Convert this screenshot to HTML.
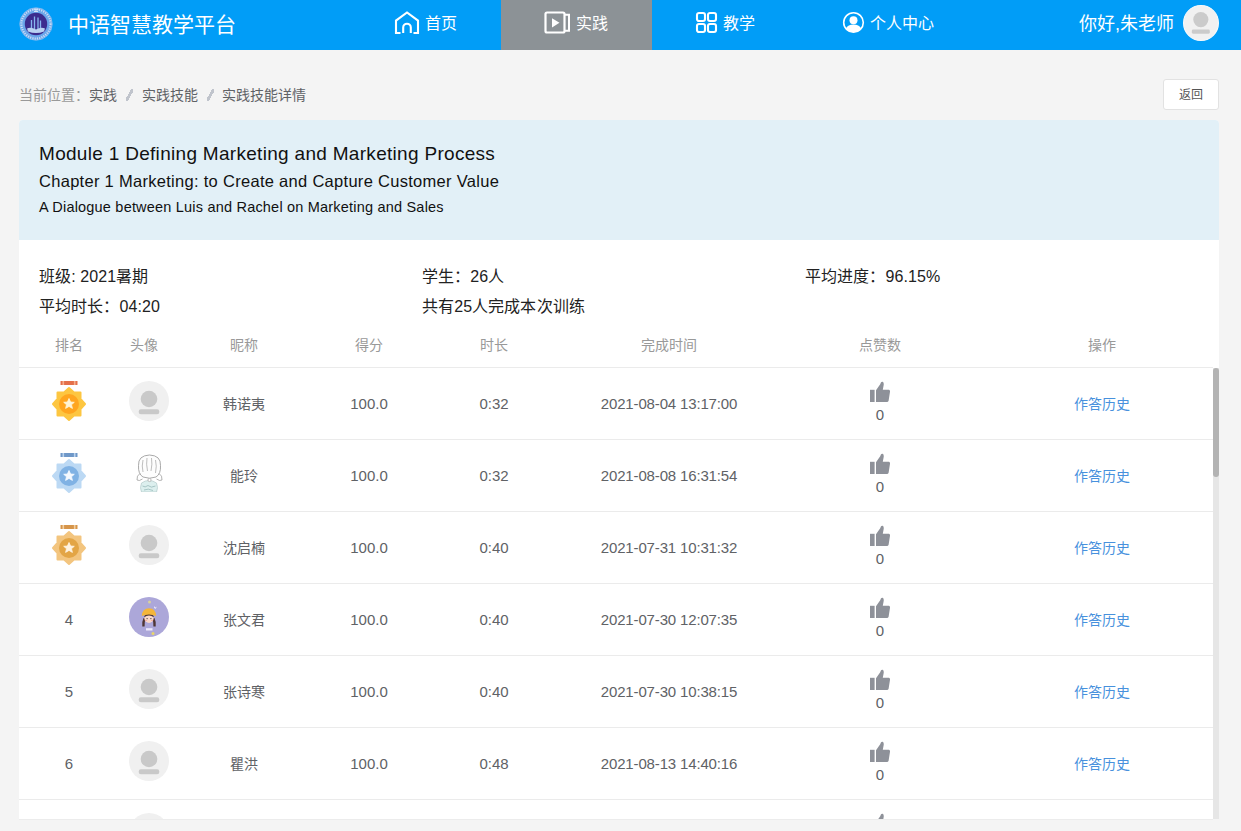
<!DOCTYPE html>
<html lang="zh-CN">
<head>
<meta charset="utf-8">
<style>
*{margin:0;padding:0;box-sizing:border-box;}
html,body{width:1241px;height:831px;overflow:hidden;background:#f4f4f4;font-family:"Liberation Sans",sans-serif;}
svg{display:block;}
.abs{position:absolute;}
.hdr{position:absolute;left:0;top:0;width:1241px;height:50px;background:#019df7;}
.logo{position:absolute;left:19px;top:7px;}
.title{position:absolute;left:68px;top:11px;font-size:21px;line-height:28px;color:#fff;white-space:nowrap;}
.nav{position:absolute;top:0;height:50px;color:#fff;font-size:16px;line-height:48px;white-space:nowrap;}
.ico{position:absolute;}
.active{position:absolute;left:501px;top:0;width:151px;height:50px;background:#8c9296;}
.hello{position:absolute;left:1079px;top:10px;font-size:18px;line-height:28px;color:#fff;white-space:nowrap;}
.hav{position:absolute;left:1183px;top:5px;}
.crumb{position:absolute;left:19px;top:85px;font-size:14px;line-height:20px;color:#999;white-space:nowrap;}
.crumb b{font-weight:normal;color:#5f6266;}
.crumb i{display:inline-block;width:7px;height:12px;margin:0 8.5px 0 9px;vertical-align:-1px;background:linear-gradient(to top left,transparent 38%,#c0c4cc 38%,#c0c4cc 62%,transparent 62%);}
.back{position:absolute;left:1163px;top:79px;width:56px;height:31px;background:#fff;border:1px solid #e2e2e2;border-radius:3px;font-size:12px;color:#555;text-align:center;line-height:31px;}
.card{position:absolute;left:19px;top:120px;width:1200px;height:699px;background:#fff;border-radius:4px 4px 0 0;overflow:hidden;}
.banner{position:absolute;left:0;top:0;width:1200px;height:120px;background:#e2f0f7;}
.t1{position:absolute;left:20px;top:23px;font-size:19px;letter-spacing:0.3px;color:#111;white-space:nowrap;}
.t2{position:absolute;left:20px;top:52px;font-size:16.5px;letter-spacing:0.29px;color:#111;white-space:nowrap;}
.t3{position:absolute;left:20px;top:78.5px;font-size:14.5px;letter-spacing:0.2px;color:#111;white-space:nowrap;}
.info{position:absolute;font-size:16px;color:#222;white-space:nowrap;letter-spacing:0.1px;}
.th{position:absolute;top:213.5px;font-size:14px;color:#999;white-space:nowrap;transform:translateX(-50%);}
.body{position:absolute;left:0;top:247px;width:1200px;height:452px;overflow:hidden;}
.row{position:absolute;left:0;width:1194px;height:72px;border-top:1px solid #ebebeb;}
.c{position:absolute;top:0;height:72px;line-height:72px;font-size:14px;color:#606266;white-space:nowrap;transform:translateX(-50%);}
.rk{left:50px;font-size:15px;}
.nm{left:225px;}
.sc{left:350px;font-size:15px;}
.du{left:475px;font-size:15px;}
.dt{left:650px;font-size:15px;letter-spacing:-0.15px;}
.op{left:1083px;color:#4791dd;}
.zero{left:861px;top:37px;height:20px;line-height:20px;font-size:15px;}
.medal{position:absolute;left:32px;top:12px;}
.av0,.avs,.avp{position:absolute;left:110px;top:13px;}
.avs{top:12px;}.avp{top:13px;}
.thumbup{position:absolute;left:851px;top:13px;}
.bline{position:absolute;left:19px;top:819px;width:1194px;height:1px;background:#ececec;}
.sb{position:absolute;left:1194px;top:248px;width:6px;height:451px;background:#e6e6e6;}
.thumb{position:absolute;left:1194px;top:248px;width:6px;height:109px;background:#b3b3b3;border-radius:3px;}
</style>
</head>
<body>
<svg width="0" height="0" style="position:absolute">
<defs>
<symbol id="star8" viewBox="0 0 36 42"></symbol>
<g id="m1">
 <rect x="9.5" y="1" width="17" height="4" fill="#e4704a"/>
 <rect x="11.5" y="1" width="1.6" height="4" fill="#f7b08e"/><rect x="22.9" y="1" width="1.6" height="4" fill="#f7b08e"/>
 <path d="M18 8 L23 12.5 L29.5 12.5 L29.5 19 L34 24 L29.5 29 L29.5 35.5 L23 35.5 L18 40 L13 35.5 L6.5 35.5 L6.5 29 L2 24 L6.5 19 L6.5 12.5 L13 12.5 Z" fill="#fdc641" stroke="#fdc641" stroke-linejoin="round" stroke-width="2"/>
 <circle cx="18" cy="24" r="10" fill="#ffa51f"/>
 <path d="M18 18.5 L19.6 22 L23.3 22.3 L20.5 24.7 L21.4 28.4 L18 26.4 L14.6 28.4 L15.5 24.7 L12.7 22.3 L16.4 22 Z" fill="#fff4d6" stroke="#fff4d6" stroke-width="0.8" stroke-linejoin="round"/>
</g>
<g id="m2">
 <rect x="9.5" y="1" width="17" height="4" fill="#6f98c8"/>
 <rect x="11.5" y="1" width="1.6" height="4" fill="#b9d2ee"/><rect x="22.9" y="1" width="1.6" height="4" fill="#b9d2ee"/>
 <path d="M18 8 L23 12.5 L29.5 12.5 L29.5 19 L34 24 L29.5 29 L29.5 35.5 L23 35.5 L18 40 L13 35.5 L6.5 35.5 L6.5 29 L2 24 L6.5 19 L6.5 12.5 L13 12.5 Z" fill="#bcd9f4" stroke="#bcd9f4" stroke-linejoin="round" stroke-width="2"/>
 <circle cx="18" cy="24" r="10" fill="#80b2e4"/>
 <path d="M18 18.5 L19.6 22 L23.3 22.3 L20.5 24.7 L21.4 28.4 L18 26.4 L14.6 28.4 L15.5 24.7 L12.7 22.3 L16.4 22 Z" fill="#f4f9ff" stroke="#f4f9ff" stroke-width="0.8" stroke-linejoin="round"/>
</g>
<g id="m3">
 <rect x="9.5" y="1" width="17" height="4" fill="#d6954a"/>
 <rect x="11.5" y="1" width="1.6" height="4" fill="#f1d0a2"/><rect x="22.9" y="1" width="1.6" height="4" fill="#f1d0a2"/>
 <path d="M18 8 L23 12.5 L29.5 12.5 L29.5 19 L34 24 L29.5 29 L29.5 35.5 L23 35.5 L18 40 L13 35.5 L6.5 35.5 L6.5 29 L2 24 L6.5 19 L6.5 12.5 L13 12.5 Z" fill="#f3c57f" stroke="#f3c57f" stroke-linejoin="round" stroke-width="2"/>
 <circle cx="18" cy="24" r="10" fill="#e3a545"/>
 <path d="M18 18.5 L19.6 22 L23.3 22.3 L20.5 24.7 L21.4 28.4 L18 26.4 L14.6 28.4 L15.5 24.7 L12.7 22.3 L16.4 22 Z" fill="#fff3e0" stroke="#fff3e0" stroke-width="0.8" stroke-linejoin="round"/>
</g>
<g id="d0">
 <circle cx="20" cy="20" r="20" fill="#f0f0f0"/>
 <circle cx="20" cy="18" r="8.3" fill="#c9c9c9"/>
 <rect x="9.7" y="28.3" width="20.6" height="5" rx="2.2" fill="#c9c9c9"/>
</g>
<g id="pg">
 <circle cx="20" cy="20" r="20" fill="#aca7d9"/>
 <circle cx="20.5" cy="5" r="1.5" fill="#d9d19c"/>
 <circle cx="24" cy="36.5" r="1.5" fill="#e8d66a"/>
 <path d="M25 11 l0.8 -2 l0.5 1.8 l1.4 -1.3 l-0.9 2.3 z" fill="#f2f0ff"/>
 <path d="M14.5 21 Q12.8 24.5 13.3 29.5 L15.6 29.5 Q15.4 25 16.6 21.5 Z" fill="#4f3633"/>
 <path d="M25.5 21 Q27.2 24.5 26.7 29.5 L24.4 29.5 Q24.6 25 23.4 21.5 Z" fill="#4f3633"/>
 <rect x="17" y="31.2" width="6.5" height="2.3" fill="#eeeafc"/>
 <ellipse cx="20" cy="21.5" rx="4.6" ry="4.4" fill="#fbd8c9"/>
 <path d="M15.2 20.3 Q15.2 16.5 20 16.5 Q24.8 16.5 24.8 20.3 Q22.5 18.6 20 18.6 Q17.5 18.6 15.2 20.3 Z" fill="#4f3633"/>
 <path d="M12.8 19 Q13.3 11.2 20 11.2 Q26.7 11.2 27.2 19 Q20 16 12.8 19 Z" fill="#f4b63a"/>
 <circle cx="18.1" cy="21.6" r="0.6" fill="#333"/><circle cx="21.9" cy="21.6" r="0.6" fill="#333"/>
 <ellipse cx="17" cy="23.3" rx="1" ry="0.6" fill="#f3a59c"/><ellipse cx="23" cy="23.3" rx="1" ry="0.6" fill="#f3a59c"/>
</g>
<g id="sk" fill="none" stroke="#8d8d8d" stroke-width="0.75">
 <path d="M12.5 31 Q10.5 36 12.5 40 L27.5 40 Q29.5 36 27.5 31 Q24 28.5 20 28.5 Q16 28.5 12.5 31 Z" fill="#dcefee" stroke="#b5cccc"/>
 <path d="M13.5 34 Q16 36 19 33.5 Q22 36.5 26.5 34 M15 38 Q19 36 24 38.5" stroke="#8fb3b3" stroke-width="0.7"/>
 <path d="M9.5 13.5 Q9 3.5 20.5 3 Q32 3.5 31.5 13.5 Q32 22 27 25 Q20.5 27.5 14 25 Q9 22 9.5 13.5 Z" fill="#fdfdfd"/>
 <path d="M14 8 Q12.5 14 14 20 M18 6 Q17 12 18.5 19 M22.5 6 Q23.5 12 22 19 M26.5 8 Q28 14 26.5 21" stroke="#9a9a9a" stroke-width="0.65"/>
 <path d="M11 21.5 Q7.5 23.5 8 28 Q10 29.5 13.5 27 M30 21.5 Q33.5 23.5 33 28 Q31 29.5 27.5 27" stroke="#999"/>
 <circle cx="20.5" cy="28" r="1.6" fill="#fff" stroke="#aaa"/>
</g>
<g id="d1">
 <circle cx="20" cy="20" r="19.4" fill="#f1f1f1" stroke="#fafafa" stroke-width="1.2"/>
 <circle cx="19.8" cy="16.2" r="8.4" fill="#cbcbcb"/>
 <rect x="9.8" y="27.3" width="20" height="4.6" rx="1.5" fill="#cbcbcb"/>
</g>
<g id="tu">
 <rect x="0" y="8.8" width="4.6" height="12.2" fill="#8e9199"/>
 <path d="M6 9.3 L10.2 3.2 Q11 0.3 12.6 0.8 Q14.2 1.5 13.6 4.6 L12.8 8.8 L19 8.8 Q20.2 9.2 20 10.8 L18.6 19.8 Q18.2 21 17 21 L6 21 Z" fill="#8e9199"/>
</g>
</defs>
</svg>
<div class="hdr">
  <svg class="logo" width="34" height="34" viewBox="0 0 34 34">
    <circle cx="17" cy="17" r="16.3" fill="#6aa6ea"/>
    <circle cx="17" cy="17" r="14.6" fill="none" stroke="#c8dcf6" stroke-width="2.2" stroke-dasharray="1.2 1.1"/>
    <circle cx="17" cy="17" r="16.3" fill="none" stroke="#9cc3f0" stroke-width="0.6"/>
    <path d="M14.5 2.2 H19.5 M17 2.2 V4.5 M15 4.5 H19" stroke="#dce9fa" stroke-width="0.9"/>
    <circle cx="17" cy="17" r="11.2" fill="#3c2c8e"/>
    <path d="M12.5 23 V13 M15.5 23 V9.5 M19 23 V10.5 M21.5 23 V13.5" stroke="#86b5ee" stroke-width="1.3"/>
    <path d="M8 21.5 Q12 19.5 17 22.5 Q22 19.5 26 21.5 L25 24.5 Q17 27.5 9 24.5 Z" fill="#b9d2f2"/>
  </svg>
  <div class="title">中语智慧教学平台</div>
  <div class="active"></div>
  <svg class="ico" style="left:394px;top:11px" width="26" height="23" viewBox="0 0 26 23">
    <path d="M6.5 22 H2 V9.6 L13 1.5 L24 9.6 V22 H19.5" fill="none" stroke="#fff" stroke-width="2.1"/>
    <path d="M9.2 22 V16.5 A3.8 3.8 0 0 1 16.8 16.5 V22" fill="none" stroke="#fff" stroke-width="2.1"/>
  </svg>
  <div class="nav" style="left:425px">首页</div>
  <svg class="ico" style="left:544px;top:11px" width="27" height="23" viewBox="0 0 27 23">
    <rect x="1.5" y="1.5" width="19" height="20" rx="1.5" fill="none" stroke="#fff" stroke-width="2.2"/>
    <path d="M20.5 3.8 H25 V19.8 H20.5" fill="none" stroke="#fff" stroke-width="2"/>
    <path d="M8 7.3 L15.5 11.8 L8 16.5 Z" fill="#fff"/>
  </svg>
  <div class="nav" style="left:576px">实践</div>
  <svg class="ico" style="left:695px;top:11px" width="23" height="23" viewBox="0 0 23 23">
    <rect x="2" y="2" width="8" height="8" rx="2" fill="none" stroke="#fff" stroke-width="2.1"/>
    <rect x="13" y="2" width="8" height="8" rx="2" fill="none" stroke="#fff" stroke-width="2.1"/>
    <rect x="2" y="13" width="8" height="8" rx="2" fill="none" stroke="#fff" stroke-width="2.1"/>
    <rect x="13" y="13" width="8" height="8" rx="2" fill="none" stroke="#fff" stroke-width="2.1"/>
  </svg>
  <div class="nav" style="left:723px">教学</div>
  <svg class="ico" style="left:842px;top:11px" width="23" height="23" viewBox="0 0 23 23">
    <circle cx="11.5" cy="11.5" r="9.8" fill="none" stroke="#fff" stroke-width="1.6"/>
    <circle cx="11.5" cy="9.3" r="4" fill="#fff"/>
    <path d="M3.8 17.5 Q6 13.8 11.5 13.6 Q17 13.8 19.2 17.5 Q16.5 21.3 11.5 21.3 Q6.5 21.3 3.8 17.5 Z" fill="#fff"/>
  </svg>
  <div class="nav" style="left:870px">个人中心</div>
  <div class="hello">你好,朱老师</div>
  <svg class="hav" width="36" height="36" viewBox="0 0 40 40"><use href="#d1"/></svg>
</div>
<div class="crumb">当前位置：<b>实践</b><i></i><b>实践技能</b><i></i><b>实践技能详情</b></div>
<div class="back">返回</div>
<div class="card">
  <div class="banner">
    <div class="t1">Module 1 Defining Marketing and Marketing Process</div>
    <div class="t2">Chapter 1 Marketing: to Create and Capture Customer Value</div>
    <div class="t3">A Dialogue between Luis and Rachel on Marketing and Sales</div>
  </div>
  <div class="info" style="left:20px;top:142.5px">班级: 2021暑期</div>
  <div class="info" style="left:403px;top:142.5px">学生：26人</div>
  <div class="info" style="left:786px;top:142.5px">平均进度：96.15%</div>
  <div class="info" style="left:20px;top:172.5px">平均时长：04:20</div>
  <div class="info" style="left:403px;top:172.5px">共有25人完成本次训练</div>
  <div class="th" style="left:50px">排名</div>
  <div class="th" style="left:125px">头像</div>
  <div class="th" style="left:225px">昵称</div>
  <div class="th" style="left:350px">得分</div>
  <div class="th" style="left:475px">时长</div>
  <div class="th" style="left:650px">完成时间</div>
  <div class="th" style="left:861px">点赞数</div>
  <div class="th" style="left:1083px">操作</div>
  <div class="body"><div class="row" style="top:0px"><svg class="medal" width="36" height="42" viewBox="0 0 36 42"><use href="#m1"/></svg><svg class="av0" width="40" height="40" viewBox="0 0 40 40"><use href="#d0"/></svg><div class="c nm">韩诺夷</div><div class="c sc">100.0</div><div class="c du">0:32</div><div class="c dt">2021-08-04 13:17:00</div><div class="c op">作答历史</div><div class="c zero">0</div><svg class="thumbup" width="20" height="21" viewBox="0 0 20 21"><use href="#tu"/></svg></div>
<div class="row" style="top:72px"><svg class="medal" width="36" height="42" viewBox="0 0 36 42"><use href="#m2"/></svg><svg class="avs" width="40" height="40" viewBox="0 0 40 40"><use href="#sk"/></svg><div class="c nm">能玲</div><div class="c sc">100.0</div><div class="c du">0:32</div><div class="c dt">2021-08-08 16:31:54</div><div class="c op">作答历史</div><div class="c zero">0</div><svg class="thumbup" width="20" height="21" viewBox="0 0 20 21"><use href="#tu"/></svg></div>
<div class="row" style="top:144px"><svg class="medal" width="36" height="42" viewBox="0 0 36 42"><use href="#m3"/></svg><svg class="av0" width="40" height="40" viewBox="0 0 40 40"><use href="#d0"/></svg><div class="c nm">沈启楠</div><div class="c sc">100.0</div><div class="c du">0:40</div><div class="c dt">2021-07-31 10:31:32</div><div class="c op">作答历史</div><div class="c zero">0</div><svg class="thumbup" width="20" height="21" viewBox="0 0 20 21"><use href="#tu"/></svg></div>
<div class="row" style="top:216px"><div class="c rk">4</div><svg class="avp" width="40" height="40" viewBox="0 0 40 40"><use href="#pg"/></svg><div class="c nm">张文君</div><div class="c sc">100.0</div><div class="c du">0:40</div><div class="c dt">2021-07-30 12:07:35</div><div class="c op">作答历史</div><div class="c zero">0</div><svg class="thumbup" width="20" height="21" viewBox="0 0 20 21"><use href="#tu"/></svg></div>
<div class="row" style="top:288px"><div class="c rk">5</div><svg class="av0" width="40" height="40" viewBox="0 0 40 40"><use href="#d0"/></svg><div class="c nm">张诗寒</div><div class="c sc">100.0</div><div class="c du">0:40</div><div class="c dt">2021-07-30 10:38:15</div><div class="c op">作答历史</div><div class="c zero">0</div><svg class="thumbup" width="20" height="21" viewBox="0 0 20 21"><use href="#tu"/></svg></div>
<div class="row" style="top:360px"><div class="c rk">6</div><svg class="av0" width="40" height="40" viewBox="0 0 40 40"><use href="#d0"/></svg><div class="c nm">瞿洪</div><div class="c sc">100.0</div><div class="c du">0:48</div><div class="c dt">2021-08-13 14:40:16</div><div class="c op">作答历史</div><div class="c zero">0</div><svg class="thumbup" width="20" height="21" viewBox="0 0 20 21"><use href="#tu"/></svg></div>
<div class="row" style="top:432px"><div class="c rk">7</div><svg class="av0" width="40" height="40" viewBox="0 0 40 40"><use href="#d0"/></svg><svg class="thumbup" width="20" height="21" viewBox="0 0 20 21"><use href="#tu"/></svg></div></div>
  <div class="sb"></div>
  <div class="thumb"></div>
</div>
<div class="bline"></div>
</body>
</html>
